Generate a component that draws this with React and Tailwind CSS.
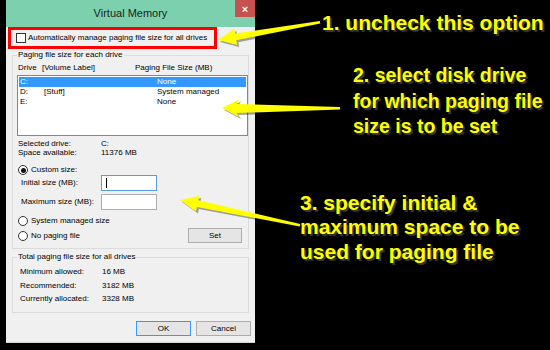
import React from "react";

// Virtual Memory dialog with yellow annotations
function Radio({ checked }) {
  return (
    <span className="w-[10px] h-[10px] rounded-full border border-[#333] bg-white flex items-center justify-center shrink-0">
      {checked && <span className="w-[5px] h-[5px] rounded-full bg-[#111]" />}
    </span>
  );
}

function Btn({ children, primary, className = "" }) {
  return (
    <div
      className={`h-[15px] flex items-center justify-center bg-[#e5e5e5] border ${
        primary ? "border-[#3399ff]" : "border-[#adadad]"
      } ${className}`}
    >
      {children}
    </div>
  );
}

const drives = [
  { d: "C:", label: "", size: "None", sel: true },
  { d: "D:", label: "[Stuff]", size: "System managed" },
  { d: "E:", label: "", size: "None" },
];

function Dialog() {
  return (
    <div className="ml-[6px] w-[249px] h-[343px] flex flex-col bg-[#f0f0f0] border-b border-[#d4d4d4] font-['Liberation_Sans',Arial,sans-serif] text-[8px] leading-[10px] text-black">
      {/* title bar */}
      <div className="h-[27px] bg-[#7dd0ae] relative flex items-center justify-center">
        <span className="text-[11px] text-[#222] -mt-[1px]">Virtual Memory</span>
        <div className="absolute right-0 top-0 w-[20px] h-[17px] bg-[#c75050] flex items-center justify-center text-white text-[11px] font-bold">
          ×
        </div>
      </div>

      {/* red highlight round the checkbox */}
      <div className="ml-[2px] w-[209px] h-[22px] border-[3px] border-[#ff0000] flex items-center pl-[5px] gap-[2px]">
        <span className="w-[10px] h-[10px] border border-[#333] bg-white shrink-0" />
        <span>Automatically manage paging file size for all drives</span>
      </div>

      {/* paging file size for each drive */}
      <fieldset className="mx-[6px] mt-[1px] border border-[#dcdcdc] p-0">
        <legend className="ml-[4px] px-[1px] leading-[10px]">Paging file size for each drive</legend>
        <div className="flex flex-col">
          <div className="flex pl-[5px] pt-[3px]">
            <span className="w-[24px]">Drive</span>
            <span className="w-[93px]">[Volume Label]</span>
            <span>Paging File Size (MB)</span>
          </div>
          <div className="ml-[4px] mt-[2px] h-[61px] border border-[#828790] bg-white p-[1px]">
            {drives.map((r) => (
              <div
                key={r.d}
                className={`h-[10px] flex pl-[1px] ${r.sel ? "bg-[#3399ff] text-white" : ""}`}
              >
                <span className="w-[24px]">{r.d}</span>
                <span className="w-[113px]">{r.label}</span>
                <span>{r.size}</span>
              </div>
            ))}
          </div>

          <div className="mt-[3px] pl-[5px] flex h-[9px] leading-[9px]">
            <span className="w-[83px]">Selected drive:</span>
            <span>C:</span>
          </div>
          <div className="pl-[5px] flex h-[9px] leading-[9px]">
            <span className="w-[83px]">Space available:</span>
            <span>11376 MB</span>
          </div>

          <div className="mt-[8px] pl-[5px] flex items-center gap-[3px] h-[10px]">
            <Radio checked />
            <span>Custom size:</span>
          </div>
          <div className="pl-[8px] flex items-center h-[16px]">
            <span className="w-[80px]">Initial size (MB):</span>
            <div className="w-[56px] h-[16px] border border-[#569de5] bg-white flex items-center pl-[4px]">
              <span className="w-px h-[10px] bg-black" />
            </div>
          </div>
          <div className="mt-[3px] pl-[8px] flex items-center h-[16px]">
            <span className="w-[80px]">Maximum size (MB):</span>
            <div className="w-[56px] h-[16px] border border-[#abadb3] bg-white" />
          </div>
          <div className="mt-[6px] pl-[5px] flex items-center gap-[3px] h-[10px]">
            <Radio />
            <span>System managed size</span>
          </div>
          <div className="mt-[2px] pl-[5px] pr-[6px] flex items-center h-[15px]">
            <Radio />
            <span className="ml-[3px] flex-1">No paging file</span>
            <Btn className="w-[54px]">Set</Btn>
          </div>
          <div className="h-[5px]" />
        </div>
      </fieldset>

      {/* totals */}
      <fieldset className="mx-[6px] mt-[3px] border border-[#dcdcdc] p-0">
        <legend className="ml-[4px] px-[1px] leading-[10px]">Total paging file size for all drives</legend>
        <div className="flex flex-col gap-[3.5px] pt-[5px] pb-[8px] pl-[7px]">
          {[
            ["Minimum allowed:", "16 MB"],
            ["Recommended:", "3182 MB"],
            ["Currently allocated:", "3328 MB"],
          ].map(([k, v]) => (
            <div key={k} className="flex h-[10px]">
              <span className="w-[82px]">{k}</span>
              <span>{v}</span>
            </div>
          ))}
        </div>
      </fieldset>

      <div className="mt-[8px] flex justify-end gap-[5px] pr-[4px]">
        <Btn primary className="w-[55px]">OK</Btn>
        <Btn className="w-[55px]">Cancel</Btn>
      </div>
    </div>
  );
}

function Arrows() {
  const shapes = [
    "218,40 234.3,29 235.1,33.5 319.8,21 320.2,23.5 236.3,40.3 237.1,45",
    "222,108 239,99.5 236.5,104 340,107 340,109.5 236.5,113 239,117",
    "180,200 199.2,195.9 198.3,200.3 300.2,224 299.8,226.5 196.9,207.1 196,211.5",
  ];
  return (
    <svg className="absolute inset-0 pointer-events-none" width="550" height="350">
      {shapes.map((p, i) => (
        <g key={i}>
          <polygon points={p} fill="#000" opacity="0.35" transform="translate(2 2)" />
          <polygon points={p} fill="#ffff00" />
        </g>
      ))}
    </svg>
  );
}

export default function App() {
  const note =
    "text-[#ffff00] font-bold font-['Liberation_Sans',Arial,sans-serif] [text-shadow:2px_2px_1px_#3a3a3a]";
  return (
    <div className="relative w-[550px] h-[350px] bg-black flex overflow-hidden">
      <Dialog />
      <div className="flex-1 flex flex-col">
        <div className={`${note} ml-[67px] mt-[10px] text-[21px] leading-[25px] whitespace-nowrap`}>
          1. uncheck this option
        </div>
        <div className={`${note} ml-[98px] mt-[28px] text-[19.5px] leading-[25.5px] whitespace-nowrap`}>
          2. select disk drive
          <br />
          for which paging file
          <br />
          size is to be set
        </div>
        <div className={`${note} ml-[45px] mt-[51px] text-[21px] leading-[24.5px] whitespace-nowrap`}>
          3. specify initial &amp;
          <br />
          maximum space to be
          <br />
          used for paging file
        </div>
      </div>
      <Arrows />
    </div>
  );
}
